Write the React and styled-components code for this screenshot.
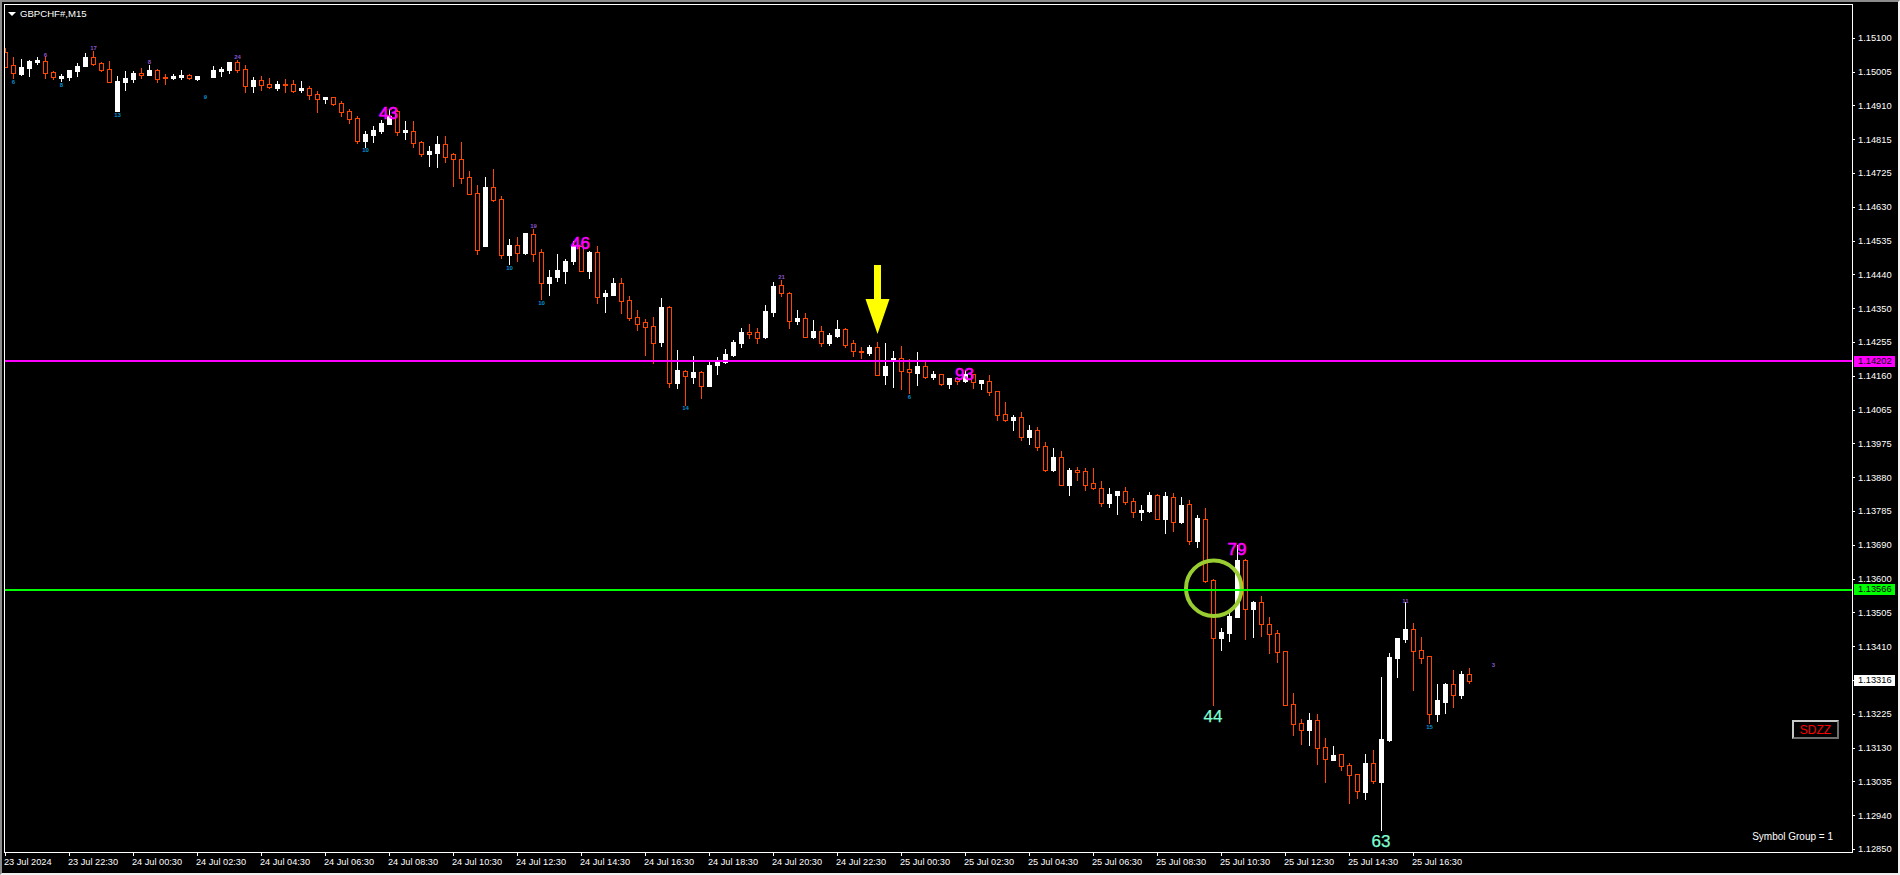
import React from 'react';
import styled, { createGlobalStyle } from 'styled-components';

const GlobalStyle = createGlobalStyle`
  html, body {
    margin: 0;
    padding: 0;
    background: #f0f0f0;
    overflow: hidden;
  }
`;

const UP = '#ffffff';
const DOWN = '#ff4500';

// [high, bodyTop, bodyBottom, low, white?] in screen pixels, one slot every 8px, first slot at x=5
const candles = [
  [48, 52, 67, 67, 0], [57, 65, 73, 78, 0], [59, 67, 74, 75, 1], [60, 61, 68, 76, 1], [57, 60, 62, 64, 1],
  [56, 61, 73, 78, 0], [71, 72, 77, 79, 0], [74, 76, 78, 81, 1], [70, 70, 77, 80, 1], [63, 66, 71, 76, 1],
  [53, 57, 66, 66, 1], [51, 57, 64, 65, 0], [62, 63, 70, 71, 0], [61, 69, 82, 82, 0], [76, 81, 111, 111, 1],
  [71, 78, 82, 90, 1], [71, 73, 79, 82, 1], [68, 73, 75, 78, 0], [65, 70, 75, 75, 1], [69, 70, 79, 82, 0],
  [74, 77, 78, 84, 0], [74, 76, 78, 79, 1], [70, 75, 77, 79, 1], [74, 75, 78, 79, 0], [76, 76, 79, 80, 1],
  null,
  [66, 70, 77, 77, 1], [67, 69, 71, 76, 1], [62, 62, 70, 73, 1], [60, 62, 70, 72, 0], [65, 69, 86, 92, 0],
  [77, 80, 86, 92, 1], [76, 80, 85, 90, 0], [78, 84, 87, 88, 0], [81, 84, 88, 90, 1], [79, 84, 85, 92, 0],
  [80, 84, 91, 92, 0], [81, 88, 90, 92, 1], [86, 88, 95, 99, 0], [91, 94, 99, 112, 0], [97, 97, 99, 103, 1],
  [97, 97, 104, 105, 0], [101, 103, 112, 116, 0], [109, 111, 119, 123, 0], [116, 118, 141, 143, 0], [131, 134, 141, 147, 1],
  [126, 130, 135, 142, 1], [120, 123, 131, 133, 1], [109, 116, 124, 124, 1], [110, 111, 132, 135, 0], [121, 130, 132, 139, 1],
  [121, 131, 143, 147, 0], [141, 142, 154, 156, 0], [146, 151, 154, 166, 1], [136, 144, 153, 167, 1], [136, 144, 157, 162, 0],
  [153, 154, 159, 186, 0], [142, 159, 178, 183, 0], [171, 177, 194, 194, 0], [185, 193, 250, 254, 0], [177, 187, 246, 246, 1],
  [169, 187, 200, 201, 0], [196, 199, 255, 258, 0], [239, 245, 255, 264, 1], [237, 245, 253, 261, 0], [233, 233, 253, 254, 1],
  [229, 234, 254, 261, 0], [249, 252, 283, 299, 0], [270, 277, 283, 295, 1], [254, 270, 277, 281, 1], [259, 261, 271, 283, 1],
  [241, 246, 261, 264, 1], [246, 246, 271, 271, 0], [251, 252, 271, 278, 1], [246, 252, 297, 303, 0], [290, 293, 296, 312, 1],
  [278, 283, 295, 295, 1], [278, 283, 301, 313, 0], [296, 300, 318, 320, 0], [310, 317, 324, 330, 0], [319, 322, 327, 355, 0],
  [317, 326, 343, 363, 0], [298, 307, 342, 346, 1], [306, 307, 383, 387, 0], [350, 370, 383, 388, 1], [370, 371, 376, 405, 0],
  [356, 372, 377, 383, 1], [371, 372, 386, 398, 0], [362, 365, 386, 386, 1], [357, 362, 365, 374, 1], [349, 354, 362, 363, 1],
  [340, 342, 355, 356, 1], [328, 332, 343, 347, 1], [324, 332, 334, 338, 0], [328, 332, 338, 343, 0], [305, 311, 337, 338, 1],
  [282, 286, 312, 316, 1], [280, 285, 293, 296, 0], [292, 293, 321, 328, 0], [310, 318, 321, 324, 1], [313, 318, 337, 337, 0],
  [320, 331, 337, 338, 1], [326, 331, 343, 346, 0], [333, 335, 343, 345, 1], [320, 329, 336, 337, 1], [328, 329, 345, 347, 0],
  [340, 343, 351, 356, 0], [347, 351, 352, 358, 0], [345, 347, 353, 355, 1], [342, 347, 375, 375, 0], [343, 366, 375, 384, 1],
  [351, 358, 361, 387, 1], [346, 358, 371, 389, 0], [359, 369, 372, 393, 0], [352, 366, 373, 385, 1], [362, 366, 377, 378, 0],
  [371, 374, 377, 379, 1], [374, 374, 384, 385, 0], [378, 378, 384, 388, 1], [378, 378, 381, 384, 0], [370, 374, 381, 382, 1],
  [374, 374, 382, 388, 0], [380, 380, 383, 389, 1], [375, 381, 392, 395, 0], [391, 391, 415, 420, 0], [402, 414, 420, 421, 0],
  [415, 417, 420, 430, 1], [412, 417, 437, 440, 0], [425, 430, 437, 444, 1], [427, 430, 447, 450, 0], [442, 446, 470, 471, 0],
  [448, 457, 470, 471, 1], [451, 457, 485, 485, 0], [468, 470, 485, 495, 1], [467, 470, 472, 480, 0], [468, 471, 485, 490, 0],
  [468, 483, 488, 489, 0], [481, 488, 503, 506, 0], [488, 494, 503, 507, 1], [491, 491, 495, 514, 1], [487, 491, 502, 504, 0],
  [498, 501, 512, 517, 0], [505, 510, 512, 520, 1], [492, 495, 511, 512, 1], [494, 495, 519, 519, 0], [492, 496, 519, 533, 1],
  [493, 497, 522, 531, 0], [497, 505, 522, 523, 1], [500, 504, 541, 544, 0], [515, 518, 541, 547, 1], [508, 519, 581, 582, 0],
  [579, 580, 638, 705, 0], [628, 632, 638, 650, 1], [610, 616, 633, 641, 1], [545, 560, 617, 617, 1], [559, 560, 609, 639, 0],
  [601, 602, 609, 637, 1], [596, 602, 624, 636, 0], [617, 624, 634, 653, 0], [630, 633, 652, 662, 0], [651, 651, 705, 705, 0],
  [693, 704, 724, 735, 0], [719, 723, 730, 744, 0], [713, 720, 730, 745, 1], [714, 720, 748, 764, 0], [738, 747, 759, 782, 0],
  [746, 755, 760, 760, 1], [754, 754, 766, 770, 0], [763, 765, 775, 803, 0], [774, 774, 791, 798, 0], [754, 763, 792, 799, 1],
  [750, 763, 781, 783, 0], [677, 739, 782, 830, 1], [653, 657, 740, 741, 1], [638, 638, 658, 677, 1], [602, 629, 639, 642, 1],
  [623, 629, 651, 690, 0], [637, 650, 658, 663, 0], [656, 656, 714, 723, 0], [684, 700, 714, 721, 1], [683, 684, 702, 713, 1],
  [670, 684, 695, 707, 0], [671, 674, 695, 698, 1], [668, 674, 681, 683, 0],
];

const tinyLabels = [
  [13, 82, '6', 'low'], [45, 55, '6', 'high'], [93, 48, '17', 'high'], [61, 85, '8', 'low'],
  [117, 115, '13', 'low'], [149, 62, '8', 'high'], [205, 97, '9', 'low'], [237, 57, '24', 'high'],
  [365, 150, '10', 'low'], [533, 226, '19', 'high'], [509, 268, '10', 'low'], [541, 303, '10', 'low'],
  [685, 408, '14', 'low'], [781, 277, '21', 'high'], [909, 397, '6', 'low'], [1405, 601, '11', 'high'],
  [1429, 727, '15', 'low'], [1493, 665, '3', 'high'],
];

const bigLabels = [
  [388.5, 118.5, '43', 'high'], [580.5, 248.5, '46', 'high'], [964.5, 379.5, '93', 'high'],
  [1237, 555, '79', 'high'], [1213, 721.5, '44', 'low'], [1381, 846.5, '63', 'low'],
];

const prices = [
  '1.15100', '1.15005', '1.14910', '1.14815', '1.14725', '1.14630', '1.14535', '1.14440', '1.14350',
  '1.14255', '1.14160', '1.14065', '1.13975', '1.13880', '1.13785', '1.13690', '1.13600', '1.13505',
  '1.13410', '1.13320', '1.13225', '1.13130', '1.13035', '1.12940', '1.12850',
];

const times = [
  '23 Jul 2024', '23 Jul 22:30', '24 Jul 00:30', '24 Jul 02:30', '24 Jul 04:30', '24 Jul 06:30',
  '24 Jul 08:30', '24 Jul 10:30', '24 Jul 12:30', '24 Jul 14:30', '24 Jul 16:30', '24 Jul 18:30',
  '24 Jul 20:30', '24 Jul 22:30', '25 Jul 00:30', '25 Jul 02:30', '25 Jul 04:30', '25 Jul 06:30',
  '25 Jul 08:30', '25 Jul 10:30', '25 Jul 12:30', '25 Jul 14:30', '25 Jul 16:30',
];

const Terminal = styled.div`
  box-sizing: border-box;
  width: 1900px;
  height: 875px;
  padding: 2px 0 0 2px;
  display: grid;
  grid-template-columns: 1849px 45px;
  grid-template-rows: 849px 20px;
  background: #000;
  border: 2px solid #f0f0f0;
  border-top-color: #8c8c8c;
  border-left-color: #8c8c8c;
  font-family: 'Liberation Sans', Arial, sans-serif;
  color: #fff;
`;

const Plot = styled.div`
  position: relative;
  box-sizing: border-box;
  border: 1px solid #fff;
  overflow: hidden;
`;

const ChartSvg = styled.svg`
  display: block;
`;

const Wick = styled.rect`
  fill: ${({ $white }) => ($white ? UP : DOWN)};
`;

const Body = styled.rect`
  fill: ${({ $white }) => ($white ? UP : '#000')};
  stroke: ${({ $white }) => ($white ? 'none' : DOWN)};
`;

const TinyCount = styled.text`
  font-family: 'Liberation Sans', Arial, sans-serif;
  font-size: 6px;
  font-weight: 700;
  text-anchor: middle;
  fill: ${({ $kind }) => ($kind === 'high' ? '#8a55c8' : '#0a90d0')};
`;

const BigCount = styled.text`
  font-family: 'Liberation Sans', Arial, sans-serif;
  font-size: 17px;
  text-anchor: middle;
  fill: ${({ $kind }) => ($kind === 'high' ? '#ff00ff' : '#7fffd4')};
  stroke: ${({ $kind }) => ($kind === 'high' ? '#ff00ff' : '#7fffd4')};
  stroke-width: ${({ $kind }) => ($kind === 'high' ? '0.6px' : '0.25px')};
`;

const ChartTitle = styled.div`
  position: absolute;
  top: 3px;
  left: 3px;
  display: flex;
  align-items: center;
  gap: 4px;
  font-size: 9.6px;
  line-height: 12px;
`;

const SymbolGroup = styled.div`
  position: absolute;
  right: 19px;
  bottom: 9px;
  font-size: 10px;
  line-height: 12px;
`;

const ToggleButton = styled.div`
  position: absolute;
  top: 715px;
  left: 1787px;
  box-sizing: border-box;
  width: 47px;
  height: 19px;
  display: flex;
  align-items: center;
  justify-content: center;
  background: #000;
  border: 2px solid #6e6e6e;
  border-top-color: #c8c8c8;
  border-left-color: #c8c8c8;
  color: #ff0000;
  font-size: 12px;
`;

const PriceAxis = styled.div`
  position: relative;
  display: flex;
  flex-direction: column;
  padding-top: 17.4px;
  font-size: 9.3px;
`;

const PriceRow = styled.div`
  flex: 0 0 33.8px;
  display: flex;
  align-items: center;
  gap: 3px;

  &::before {
    content: '';
    width: 2px;
    height: 1px;
    background: #fff;
  }
`;

const PriceTag = styled.div`
  position: absolute;
  left: 1px;
  top: ${({ $top }) => $top}px;
  width: 41px;
  height: 11px;
  box-sizing: border-box;
  padding-left: 4px;
  line-height: 11px;
  background: ${({ $bg }) => $bg};
  color: #000;
`;

const TimeAxis = styled.div`
  grid-column: 1 / -1;
  display: flex;
  font-size: 9.2px;
`;

const TimeCell = styled.div`
  flex: 0 0 64px;
  white-space: nowrap;
  line-height: 12px;
  padding-top: 3px;
  position: relative;

  &::before {
    content: '';
    position: absolute;
    top: 0;
    left: 1px;
    width: 1px;
    height: 3px;
    background: #fff;
  }
`;

const Candle = ({ slot, data }) => {
  const [high, top, bottom, low, white] = data;
  const x = 5 + slot * 8;
  return (
    <g>
      <Wick $white={white} x={x} y={high} width={1} height={low - high + 1} />
      {white ? (
        <Body $white x={x - 2} y={top} width={5} height={bottom - top + 1} />
      ) : (
        <Body x={x - 1.5} y={top + 0.5} width={4} height={bottom - top} />
      )}
    </g>
  );
};

const App = () => (
  <>
    <GlobalStyle />
    <Terminal>
      <Plot>
        <ChartSvg width="1847" height="847" viewBox="5 5 1847 847" shapeRendering="crispEdges">
          {candles.map((c, i) => c && <Candle key={i} slot={i} data={c} />)}
          {tinyLabels.map(([x, y, text, kind], i) => (
            <TinyCount key={i} $kind={kind} x={x + 0.5} y={y + 2}>{text}</TinyCount>
          ))}
          <circle cx="1213.8" cy="588.3" r="27.8" fill="none" stroke="#9acd32" strokeWidth="4" shapeRendering="auto" />
          <rect x="0" y="360" width="1852" height="2" fill="#ff00ff" />
          <rect x="0" y="589" width="1852" height="2" fill="#00ff00" />
          <polygon points="874,265 881,265 881,299 889.5,299 877.5,334 865.5,299 874,299" fill="#ffff00" shapeRendering="auto" />
          {bigLabels.map(([x, y, text, kind], i) => (
            <BigCount key={i} $kind={kind} x={x} y={y} shapeRendering="auto">{text}</BigCount>
          ))}
        </ChartSvg>
        <ChartTitle>
          <svg width="8" height="4" viewBox="0 0 8 4"><polygon points="0,0 8,0 4,4" fill="#fff" /></svg>
          GBPCHF#,M15
        </ChartTitle>
        <ToggleButton>SDZZ</ToggleButton>
        <SymbolGroup>Symbol Group = 1</SymbolGroup>
      </Plot>
      <PriceAxis>
        {prices.map((p) => <PriceRow key={p}>{p}</PriceRow>)}
        <PriceTag $top={352} $bg="#ff00ff">1.14202</PriceTag>
        <PriceTag $top={580} $bg="#00ff00">1.13566</PriceTag>
        <PriceTag $top={671} $bg="#ffffff">1.13316</PriceTag>
      </PriceAxis>
      <TimeAxis>
        {times.map((t) => <TimeCell key={t}>{t}</TimeCell>)}
      </TimeAxis>
    </Terminal>
  </>
);

export default App;
